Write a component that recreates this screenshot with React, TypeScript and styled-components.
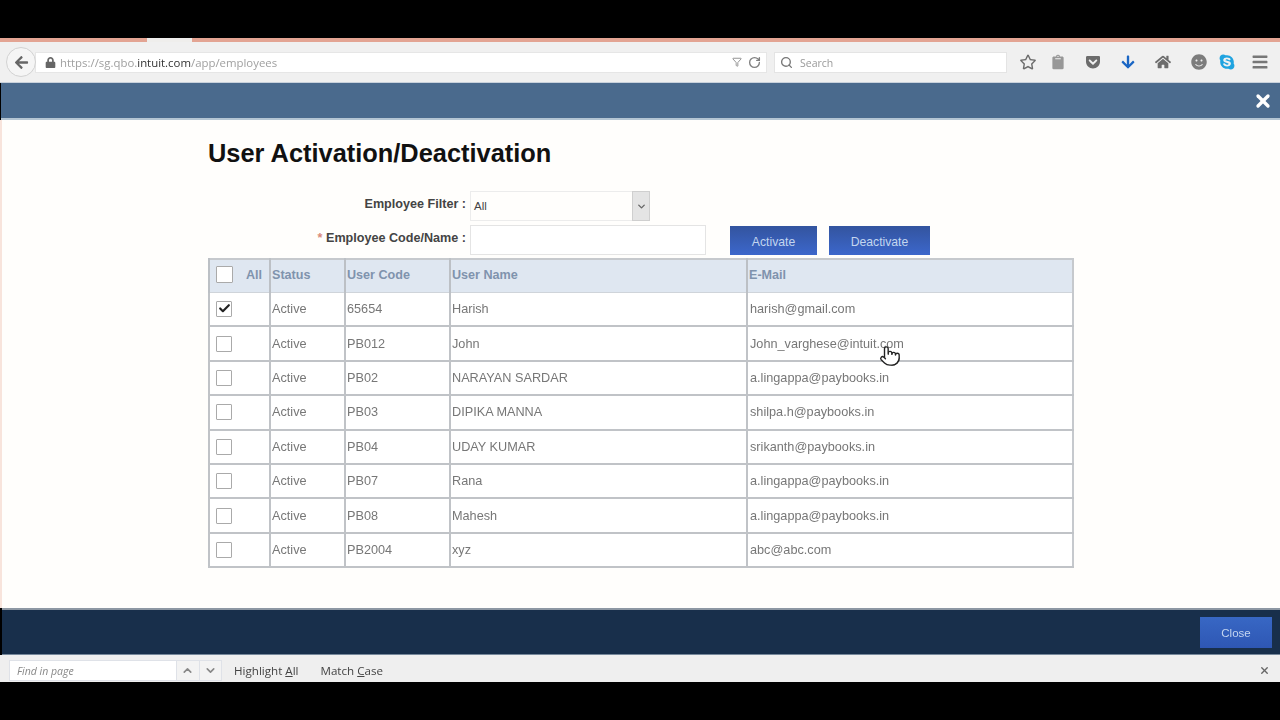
import React from 'react'
import styled, { createGlobalStyle } from 'styled-components'
import { Pointer, RotateCw, Search, Funnel, X, ChevronUp, ChevronDown, Check } from 'lucide-react'
import { FaArrowLeft, FaLock, FaRegStar, FaHome, FaBars, FaGetPocket, FaArrowDown, FaSkype, FaClipboard, FaSmile } from 'react-icons/fa'

const employees = [
  { code: '65654', name: 'Harish', email: 'harish@gmail.com', checked: true },
  { code: 'PB012', name: 'John', email: 'John_varghese@intuit.com' },
  { code: 'PB02', name: 'NARAYAN SARDAR', email: 'a.lingappa@paybooks.in' },
  { code: 'PB03', name: 'DIPIKA MANNA', email: 'shilpa.h@paybooks.in' },
  { code: 'PB04', name: 'UDAY KUMAR', email: 'srikanth@paybooks.in' },
  { code: 'PB07', name: 'Rana', email: 'a.lingappa@paybooks.in' },
  { code: 'PB08', name: 'Mahesh', email: 'a.lingappa@paybooks.in' },
  { code: 'PB2004', name: 'xyz', email: 'abc@abc.com' },
]

const App = () => {
  return (
    <>
      <GlobalStyle />
      <Page>
        <BlackBar $height="38px" />
        <TabStrip>
          <ActiveTab />
        </TabStrip>
        <Toolbar>
          <BackButton>
            <FaArrowLeft size={15} />
          </BackButton>
          <UrlBar>
            <FaLock size={11} color="#666" />
            <UrlText>
              https://sg.qbo.<b>intuit.com</b>/app/employees
            </UrlText>
            <UrlActions>
              <Funnel size={10} />
              <RotateCw size={13} strokeWidth={2.5} />
            </UrlActions>
          </UrlBar>
          <SearchBar>
            <Search size={13} color="#777" strokeWidth={2.5} />
            <span>Search</span>
          </SearchBar>
          <ToolIcons>
            <ToolIcon $left={1028}><FaRegStar size={17} /></ToolIcon>
            <ToolIcon $left={1058}><FaClipboard size={15} color="#979797" /></ToolIcon>
            <ToolIcon $left={1093}><FaGetPocket size={16} /></ToolIcon>
            <ToolIcon $left={1128}><FaArrowDown size={15} color="#1a66c4" /></ToolIcon>
            <ToolIcon $left={1163}><FaHome size={16} /></ToolIcon>
            <ToolIcon $left={1199}><FaSmile size={16} color="#7c7c7c" /></ToolIcon>
            <ToolIcon $left={1227}><FaSkype size={17} color="#1fa3e0" /></ToolIcon>
            <ToolIcon $left={1260}><FaBars size={17} color="#777" /></ToolIcon>
          </ToolIcons>
        </Toolbar>
        <DialogHeader>
          <CloseCross>
            <X size={20} strokeWidth={4} />
          </CloseCross>
        </DialogHeader>
        <DialogBody>
          <Title>User Activation/Deactivation</Title>
          <FilterRow>
            <Label>Employee Filter :</Label>
            <SelectBox>
              <span>All</span>
              <SelectArrow>
                <ChevronDown size={11} strokeWidth={3} />
              </SelectArrow>
            </SelectBox>
          </FilterRow>
          <CodeRow>
            <Label>
              <Required>*</Required> Employee Code/Name :
            </Label>
            <CodeInput />
            <ActionButton $width="87px" $left="24px">Activate</ActionButton>
            <ActionButton $width="101px" $left="12px">Deactivate</ActionButton>
          </CodeRow>
          <Table>
            <colgroup>
              <col style={{ width: 61 }} />
              <col style={{ width: 75 }} />
              <col style={{ width: 105 }} />
              <col style={{ width: 297 }} />
              <col />
            </colgroup>
            <thead>
              <tr>
                <HeadCell>
                  <AllCell>
                    <Box $large />
                    <span>All</span>
                  </AllCell>
                </HeadCell>
                <HeadCell>Status</HeadCell>
                <HeadCell>User Code</HeadCell>
                <HeadCell>User Name</HeadCell>
                <HeadCell>E-Mail</HeadCell>
              </tr>
            </thead>
            <tbody>
              {employees.map((e) => (
                <tr key={e.code}>
                  <Cell>
                    <Box>{e.checked && <Check size={13} strokeWidth={4} color="#222" />}</Box>
                  </Cell>
                  <Cell>Active</Cell>
                  <Cell>{e.code}</Cell>
                  <Cell>{e.name}</Cell>
                  <Cell>{e.email}</Cell>
                </tr>
              ))}
            </tbody>
          </Table>
        </DialogBody>
        <DialogFooter>
          <CloseButton>Close</CloseButton>
        </DialogFooter>
        <FindBar>
          <FindInput>Find in page</FindInput>
          <FindNav><ChevronUp size={13} strokeWidth={3} /></FindNav>
          <FindNav><ChevronDown size={13} strokeWidth={3} /></FindNav>
          <FindOption $left="12px">Highlight <u>A</u>ll</FindOption>
          <FindOption $left="22px">Match <u>C</u>ase</FindOption>
          <FindClose>
            <X size={11} strokeWidth={3} />
          </FindClose>
        </FindBar>
        <BlackBar $height="38px" />
        <HandCursor>
          <Pointer size={22} fill="#fff" color="#222" strokeWidth={1.5} />
        </HandCursor>
      </Page>
    </>
  )
}

export default App

const GlobalStyle = createGlobalStyle`
  html, body {
    margin: 0;
    padding: 0;
    background: #000;
  }
  body {
    font-family: "Liberation Sans", Arial, sans-serif;
  }
`

const Page = styled.div`
  position: relative;
  width: 1280px;
  height: 720px;
  overflow: hidden;
  display: flex;
  flex-direction: column;
  filter: blur(0.6px);
`

const BlackBar = styled.div<{ $height: string }>`
  height: ${(props) => props.$height};
  background: #000;
  flex: none;
`

const TabStrip = styled.div`
  height: 4px;
  flex: none;
  background: #e3a493;
  padding-left: 147px;
`

const ActiveTab = styled.div`
  width: 45px;
  height: 4px;
  background: #efeeec;
`

const Toolbar = styled.div`
  position: relative;
  height: 41px;
  flex: none;
  display: flex;
  align-items: center;
  padding: 0 0 0 6px;
  background: #f0f0f0;
  border-bottom: 1px solid #c9d2dc;
  box-sizing: border-box;
`

const BackButton = styled.div`
  position: relative;
  z-index: 1;
  width: 30px;
  height: 30px;
  flex: none;
  box-sizing: border-box;
  border-radius: 50%;
  border: 1px solid #d2d2d2;
  background: #f5f5f5;
  color: #666;
  display: flex;
  align-items: center;
  justify-content: center;
`

const UrlBar = styled.div`
  width: 732px;
  height: 21px;
  margin-left: -1px;
  flex: none;
  display: flex;
  align-items: center;
  padding-left: 9px;
  box-sizing: border-box;
  background: #fff;
  border: 1px solid #e6e6e6;
`

const UrlText = styled.span`
  margin-left: 4px;
  padding-top: 1px;
  font-family: "Open Sans", sans-serif;
  font-size: 11.4px;
  color: #a0a0a0;

  > b {
    font-weight: 400;
    color: #333;
  }
`

const UrlActions = styled.div`
  margin-left: auto;
  display: flex;
  align-items: center;
  gap: 6px;
  padding-right: 5px;
  color: #808080;
`

const SearchBar = styled.div`
  width: 233px;
  height: 21px;
  margin-left: 7px;
  flex: none;
  box-sizing: border-box;
  display: flex;
  align-items: center;
  gap: 7px;
  padding-left: 5px;
  background: #fff;
  border: 1px solid #e4e4e4;
  font-family: "Open Sans", sans-serif;
  font-size: 10.5px;
  color: #999;

  > span {
    padding-top: 1px;
  }
`

const ToolIcons = styled.div`
  flex: 1;
`

const ToolIcon = styled.span<{ $left: number }>`
  position: absolute;
  left: ${(props) => props.$left}px;
  top: 20px;
  transform: translate(-50%, -50%);
  display: flex;
  color: #6c6c6c;
`

const DialogHeader = styled.div`
  height: 37px;
  flex: none;
  box-sizing: border-box;
  background: #4a6a8d;
  border-bottom: 2px solid #b4c5d3;
  margin-left: 1px;
  display: flex;
  align-items: center;
  justify-content: flex-end;
  padding-right: 7px;
`

const CloseCross = styled.div`
  display: flex;
  color: #fff;
`

const DialogBody = styled.div`
  flex: 1;
  min-height: 0;
  box-sizing: border-box;
  background: #fffefc;
  border-left: 2px solid #f8e4dc;
  padding: 17px 0 0 206px;
`

const Title = styled.h1`
  margin: 0;
  height: 32px;
  font-size: 25.4px;
  line-height: 32px;
  font-weight: 700;
  color: #111;
`

const FilterRow = styled.div`
  display: flex;
  align-items: center;
  margin-top: 22px;
  height: 30px;
`

const CodeRow = styled(FilterRow)`
  margin-top: 4px;
`

const Label = styled.label`
  width: 258px;
  flex: none;
  text-align: right;
  font-size: 12.6px;
  font-weight: 700;
  color: #444;
  padding-bottom: 4px;
`

const Required = styled.span`
  color: #d98a7a;
`

const SelectBox = styled.div`
  width: 180px;
  height: 30px;
  margin-left: 4px;
  box-sizing: border-box;
  display: flex;
  align-items: center;
  justify-content: space-between;
  padding-left: 3px;
  border: 1px solid #ececec;
  font-size: 11.5px;
  color: #444;
`

const SelectArrow = styled.div`
  width: 16px;
  height: 28px;
  display: flex;
  align-items: center;
  justify-content: center;
  background: #e4e4e4;
  border: 1px solid #cfcfcf;
  margin-right: -1px;
  color: #666;
`

const CodeInput = styled.div`
  width: 236px;
  height: 30px;
  margin-left: 4px;
  flex: none;
  box-sizing: border-box;
  border: 1px solid #e4e4e4;
  background: #fff;
`

const ActionButton = styled.button<{ $width: string; $left: string }>`
  width: ${(props) => props.$width};
  height: 29px;
  margin-left: ${(props) => props.$left};
  margin-top: 1px;
  flex: none;
  padding: 3px 0 0;
  border: 0;
  background: linear-gradient(#33549f, #3c67cb);
  font-family: inherit;
  font-size: 12.2px;
  color: #c3d6ef;
`

const Table = styled.table`
  width: 866px;
  margin-top: 3px;
  table-layout: fixed;
  border-collapse: collapse;
  border: 2px solid #c6c9cd;
`

const HeadCell = styled.th`
  height: 33px;
  padding: 0 0 2px 1px;
  box-sizing: border-box;
  text-align: left;
  font-size: 12.6px;
  font-weight: 700;
  color: #7f93ad;
  background: #dfe7f1;
  border-left: 2px solid #bcc0c5;
  border-bottom: 1px solid #cfd4da;
`

const AllCell = styled.div`
  display: flex;
  align-items: center;
  justify-content: space-between;
  padding: 0 7px 0 5px;
  height: 20px;
`

const Box = styled.div<{ $large?: boolean }>`
  width: ${(props) => (props.$large ? '17px' : '16px')};
  height: ${(props) => (props.$large ? '17px' : '16px')};
  box-sizing: border-box;
  background: #fff;
  border: 1px solid #aaa;
  border-radius: 1px;
  display: flex;
  align-items: center;
  justify-content: center;
`

const Cell = styled.td`
  height: 34.4px;
  padding: 0 0 0 1px;
  box-sizing: border-box;
  font-size: 12.7px;
  color: #777;
  background: #fff;
  border-left: 2px solid #c0c3c7;
  border-bottom: 2px solid #c0c3c7;

  &:first-child {
    padding-left: 6px;
  }

  &:last-child {
    padding-left: 2px;
  }
`

const DialogFooter = styled.div`
  height: 47px;
  flex: none;
  box-sizing: border-box;
  background: #182f4b;
  border-top: 2px solid #8d97a3;
  border-bottom: 1px solid #76889b;
  margin-left: 2px;
  display: flex;
  align-items: center;
  justify-content: flex-end;
  padding-right: 8px;
`

const CloseButton = styled.button`
  width: 72px;
  height: 31px;
  padding: 2px 0 0;
  border: 0;
  background: linear-gradient(#3867c4, #2e57b4);
  font-family: inherit;
  font-size: 11.5px;
  color: #c5d6f0;
`

const FindBar = styled.div`
  height: 27px;
  flex: none;
  box-sizing: border-box;
  background: #efefef;
  display: flex;
  align-items: center;
  padding: 3px 0 0 9px;
`

const FindInput = styled.div`
  width: 168px;
  height: 21px;
  box-sizing: border-box;
  padding-left: 7px;
  background: #fff;
  border: 1px solid #dfe2e8;
  font-family: "Open Sans", sans-serif;
  font-style: italic;
  font-size: 10.5px;
  line-height: 20px;
  color: #888;
`

const FindNav = styled.div`
  width: 22.5px;
  height: 21px;
  box-sizing: border-box;
  display: flex;
  align-items: center;
  justify-content: center;
  background: #f3f3f3;
  border: 1px solid #dfe2e8;
  border-left: 0;
  color: #888;
`

const FindOption = styled.span<{ $left: string }>`
  margin-left: ${(props) => props.$left};
  font-family: "Open Sans", sans-serif;
  font-size: 11.6px;
  color: #444;
`

const FindClose = styled.div`
  margin-left: auto;
  padding-right: 10px;
  display: flex;
  color: #666;
`

const HandCursor = styled.div`
  position: absolute;
  left: 879px;
  top: 345px;
  display: flex;
`
